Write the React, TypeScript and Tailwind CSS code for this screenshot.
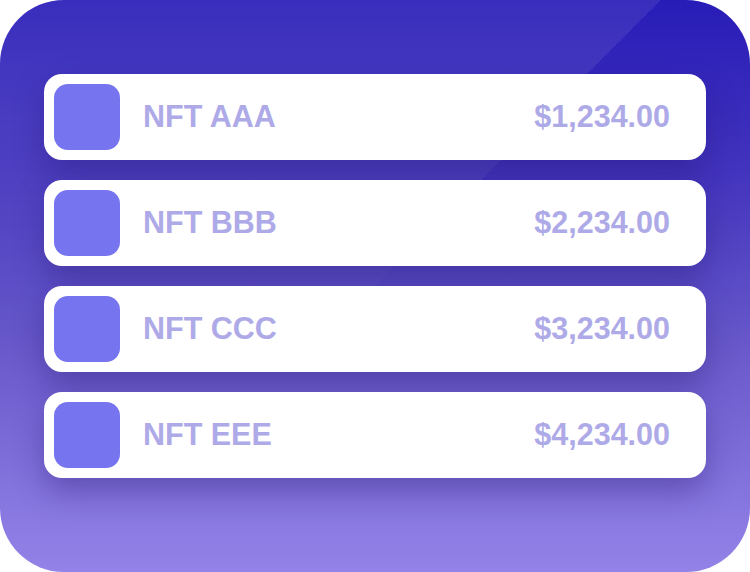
import React from "react";

const items = [
  { name: "NFT AAA", price: "$1,234.00" },
  { name: "NFT BBB", price: "$2,234.00" },
  { name: "NFT CCC", price: "$3,234.00" },
  { name: "NFT EEE", price: "$4,234.00" },
];

const App = () => {
  return (
    <div className="w-[750px] h-[572px] bg-white" style={{ fontFamily: '"Liberation Sans", Arial, sans-serif' }}>
      <div className="relative w-full h-full rounded-[64px] overflow-hidden bg-[linear-gradient(180deg,#281cb8_0%,#4234bd_30%,#6a5acb_62%,#9383e8_100%)]">
        <div className="absolute inset-0 bg-[linear-gradient(135deg,rgba(255,255,255,0.08)_50%,transparent_50%)] [mask-image:linear-gradient(180deg,black_20%,transparent_60%)]" />
        <div className="relative flex flex-col gap-5 pt-[74px] px-[44px]">
          {items.map((item) => (
            <div
              key={item.name}
              className="h-[86px] bg-white rounded-[18px] flex items-center pl-[10px] pr-[36px] shadow-[0_14px_30px_rgba(35,20,110,0.35)]"
            >
              <div className="w-[66px] h-[66px] rounded-[14px] bg-[#7674ef]" />
              <div className="ml-[23px] text-[30.5px] font-bold text-[#aeaae8]">{item.name}</div>
              <div className="ml-auto text-[30.5px] font-bold text-[#aeaae8]">{item.price}</div>
            </div>
          ))}
        </div>
      </div>
    </div>
  );
};

export default App;
